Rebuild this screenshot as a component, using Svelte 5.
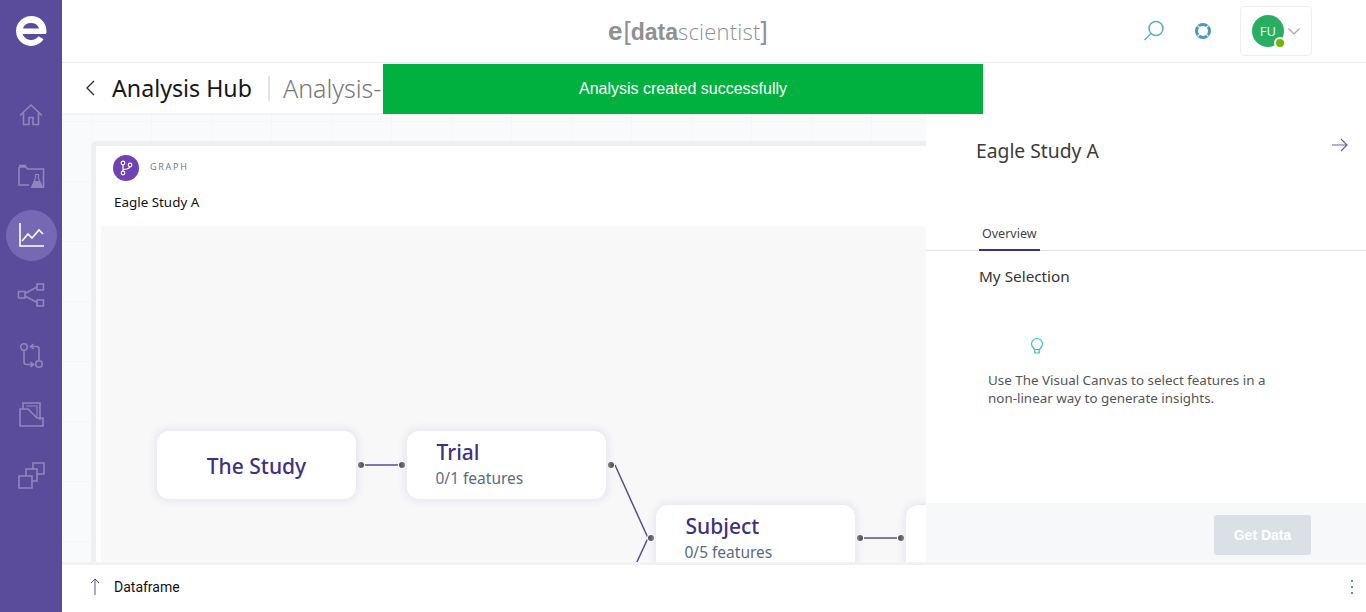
<script>
  const nav = ['home', 'lab', 'chart', 'share', 'flow', 'folder', 'copy'];

  const nodes = [
    { x: 56, y: 205, title: 'The Study' },
    { x: 306, y: 205, title: 'Trial', sub: '0/1 features' },
    { x: 555, y: 279, title: 'Subject', sub: '0/5 features' },
    { x: 805, y: 279, title: '' }
  ];

  const dots = [
    [260, 239], [301, 239], [510, 239], [550, 312], [759, 312], [800, 312]
  ];
</script>

<div class="shell">
  <aside class="sidebar">
    <div class="logo">
      <svg width="32" height="32" viewBox="0 0 32 32">
        <path d="M16 1a15 15 0 1 0 12.600 23.200l-5.200-3A9 9 0 0 1 7.600 19H31c.4-1 .5-2 .5-3A15 15 0 0 0 16 1zM7.800 13.400A9 9 0 0 1 24.200 13.400z" fill="#fff" fill-rule="evenodd"/>
      </svg>
    </div>
    <nav class="nav">
      {#each nav as item}
        <div class="nav-item" class:active={item === 'chart'}>
          <svg width="28" height="28" viewBox="0 0 28 28" fill="none" stroke="currentColor" stroke-width="1.600">
            {#if item === 'home'}
              <path d="M3 14.500 14 4l11 10.500M6.500 12v11.500h5.500V16.500h4v7h5.500V12"/>
            {:else if item === 'lab'}
              <path d="M2 6h7l1.500 2H26.500v18H25M2 6v18h10M2 4.500h7"/>
              <path d="M18.500 13.500h3v4l4 9h-11l4-9z" stroke-width="1.200"/>
              <path d="M17 20h6l2.500 6.500h-11z" fill="currentColor" stroke="none"/>
            {:else if item === 'chart'}
              <path d="M3 2v23h24M5 20l6-7 4 4 7-8 4 4"/>
            {:else if item === 'share'}
              <path d="M8 12.500 20 6M8 15l12 6.500"/>
              <path d="M1.500 10.500h6.500v6.500H1.500zM20 3h6.500v6H20zM20 19h6.500v6H20z"/>
            {:else if item === 'flow'}
              <circle cx="7" cy="6" r="3.300"/><circle cx="22" cy="23" r="3.300"/>
              <path d="M7 10v11q0 2.500 2.500 2.500H16M13.500 21l3 2.500-3 2.500M22 19V8q0-2.500-2.500-2.500H14M16.500 3l-3 2.500 3 2.500"/>
            {:else if item === 'folder'}
              <path d="M6 8V2h17v17M3 8h8l9 9h6v8H3z"/>
              <path d="M9 5h11v12" opacity="0.700"/>
            {:else}
              <path d="M2 15h13v12H2zM9 15V8h11v12h-5M16 8V2h11v11h-7"/>
            {/if}
          </svg>
        </div>
      {/each}
    </nav>
  </aside>

  <div class="main">
    <header class="topbar">
      <div class="brand"><span class="b-e">e</span><span class="b-br">[</span><span class="b-data">data</span><span class="b-sci">scientist</span><span class="b-br">]</span></div>
      <div class="top-actions">
        <svg class="search" width="24" height="24" viewBox="0 0 24 24" fill="none" stroke="#5aa9d6" stroke-width="1.500">
          <circle cx="14" cy="9.500" r="7"/><path d="M9 14.500 2.500 21"/>
        </svg>
        <svg class="help" width="18" height="18" viewBox="0 0 18 18" fill="none" stroke="#4a97c4">
          <circle cx="9" cy="9" r="6.500" stroke-width="3"/>
          <path d="M3.500 3.500l2.800 2.800M14.500 3.500l-2.800 2.800M3.500 14.500l2.800-2.800M14.500 14.500l-2.800-2.800" stroke="#e4f0f7" stroke-width="1.300"/>
        </svg>
        <div class="user">
          <div class="avatar">FU<span class="online"></span></div>
          <svg width="12" height="7" viewBox="0 0 12 7" fill="none" stroke="#a5a5a5" stroke-width="1.200"><path d="M.5.5 6 6l5.500-5.500"/></svg>
        </div>
      </div>
    </header>

    <div class="subbar">
      <svg width="12" height="18" viewBox="0 0 12 18" fill="none" stroke="#333" stroke-width="1.400"><path d="M10 2 3 9l7 7"/></svg>
      <h1>Analysis Hub</h1>
      <span class="sep"></span>
      <span class="crumb">Analysis-</span>
    </div>

    <div class="body">
      <section class="canvas">
        <div class="card">
          <div class="card-head">
            <span class="graph-badge">
              <svg width="16" height="16" viewBox="0 0 16 16" fill="none" stroke="#fff" stroke-width="1.200">
                <circle cx="5" cy="3" r="1.800"/><circle cx="5" cy="13" r="1.800"/><circle cx="12" cy="5" r="1.800"/>
                <path d="M5 5v6M5 9.500c4 0 6-.5 7-2.700"/>
              </svg>
            </span>
            <span class="graph-label">GRAPH</span>
          </div>
          <div class="card-title">Eagle Study A</div>
          <div class="diagram">
            <svg class="links" width="900" height="360" fill="none" stroke="#5a4c9b" stroke-width="1.500">
              <path d="M264 239h33M514 239l33 73-12 26M763 312h33"/>
            </svg>
            {#each dots as d}
              <span class="dot" style="left:{d[0] - 3}px;top:{d[1] - 3}px"></span>
            {/each}
            {#each nodes as n}
              <div class="node" class:center={!n.sub} style="left:{n.x}px;top:{n.y}px">
                <div class="node-title">{n.title}</div>
                {#if n.sub}<div class="node-sub">{n.sub}</div>{/if}
              </div>
            {/each}
          </div>
        </div>
      </section>

      <aside class="panel">
        <div class="panel-head">
          <h2>Eagle Study A</h2>
          <svg width="18" height="14" viewBox="0 0 18 14" fill="none" stroke="#6a5fa8" stroke-width="1.200"><path d="M1 7h15M10 1l6 6-6 6"/></svg>
        </div>
        <div class="tabs"><span class="tab">Overview</span></div>
        <div class="panel-body">
          <h3>My Selection</h3>
          <svg class="bulb" width="14" height="18" viewBox="0 0 14 18" fill="none" stroke="#35bfc4" stroke-width="1.200">
            <path d="M4.500 12.500C3 11 1.500 9.500 1.500 7a5.500 5.500 0 0 1 11 0c0 2.500-1.500 4-3 5.500zM4.800 12.500V16h4.400v-3.500"/>
          </svg>
          <p>Use The Visual Canvas to select features in a non-linear way to generate insights.</p>
        </div>
        <div class="panel-foot"><button disabled>Get Data</button></div>
      </aside>
    </div>

    <footer class="dock">
      <svg width="12" height="18" viewBox="0 0 12 18" fill="none" stroke="#5a4c9b" stroke-width="1"><path d="M6 17V1M2 5l4-4 4 4"/></svg>
      <span class="dock-label">Dataframe</span>
      <span class="kebab"><i></i><i></i><i></i></span>
    </footer>
  </div>

  <div class="toast">Analysis created successfully</div>
</div>

<style>
  :global(body) {
    margin: 0;
    font-family: "Noto Sans", sans-serif;
    overflow: hidden;
  }

  .shell {
    display: flex;
    width: 1366px;
    height: 612px;
    overflow: hidden;
    position: relative;
    background: #fff;
  }

  .sidebar {
    width: 62px;
    flex: none;
    background: #5a4c9b;
    display: flex;
    flex-direction: column;
    align-items: center;
  }

  .logo {
    height: 62px;
    display: flex;
    align-items: center;
    padding-right: 1px;
  }

  .nav {
    display: flex;
    flex-direction: column;
    align-items: center;
    gap: 9px;
    padding-top: 28px;
  }

  .nav-item {
    width: 51px;
    height: 51px;
    border-radius: 50%;
    display: flex;
    align-items: center;
    justify-content: center;
    color: #8f86bf;
  }

  .nav-item svg { margin-bottom: 2px; }

  .nav-item.active {
    background: #7668b3;
    color: #fff;
  }

  .main {
    flex: 1;
    min-width: 0;
    display: flex;
    flex-direction: column;
  }

  .topbar {
    height: 62px;
    flex: none;
    border-bottom: 1px solid #eeeeee;
    display: flex;
    align-items: center;
    justify-content: flex-end;
    position: relative;
  }

  .brand {
    position: absolute;
    left: 546px;
    top: 15px;
    font-family: "Liberation Sans", sans-serif;
    font-size: 23px;
    color: #8e9092;
    line-height: 32px;
    white-space: nowrap;
  }

  .b-e, .b-data { font-weight: 700; }
  .b-e { font-size: 26px; margin-right: 1px; }
  .b-br { font-weight: 400; font-size: 26px; }
  .b-sci { font-family: "Open Sans", sans-serif; font-weight: 300; font-size: 22px; letter-spacing: .2px; }

  .top-actions {
    display: flex;
    align-items: center;
    padding-right: 54px;
  }

  .search { margin-right: 28px; }
  .help { margin-right: 28px; }

  .user {
    width: 72px;
    height: 50px;
    box-sizing: border-box;
    border: 1px solid #eeeeee;
    border-radius: 5px;
    display: flex;
    align-items: center;
    padding-left: 11px;
    gap: 4px;
  }

  .avatar {
    width: 32px;
    height: 32px;
    border-radius: 50%;
    background: #27ae60;
    color: #e8f7ee;
    font-size: 13px;
    display: flex;
    align-items: center;
    justify-content: center;
    position: relative;
  }

  .online {
    position: absolute;
    right: -2px;
    bottom: -2px;
    width: 8px;
    height: 8px;
    border-radius: 50%;
    background: #6fb800;
    border: 2px solid #fff;
  }

  .subbar {
    height: 50px;
    flex: none;
    display: flex;
    align-items: center;
    padding-left: 22px;
    box-shadow: 0 1px 3px rgba(0, 0, 0, .05);
    position: relative;
    z-index: 1;
    background: #fff;
  }

  h1 {
    margin: 0 0 0 16px;
    font-size: 23.200px;
    font-weight: 400;
    color: #161616;
  }

  .sep {
    width: 2px;
    height: 25px;
    background: #e0e3e8;
    margin: 0 13px 0 16px;
  }

  .crumb {
    font-size: 25px;
    font-weight: 300;
    color: #777;
  }

  .body {
    flex: 1;
    min-height: 0;
    display: flex;
  }

  .canvas {
    flex: 1;
    min-width: 0;
    overflow: hidden;
    background-color: #f9fafb;
    background-image:
      linear-gradient(#f5f6f8 1px, transparent 1px),
      linear-gradient(90deg, #f5f6f8 1px, transparent 1px);
    background-size: 60px 60px;
    background-position: 29px 8px;
    padding: 28px 0 0 29px;
  }

  .card {
    width: 1000px;
    height: 600px;
    box-sizing: border-box;
    background: #fff;
    border: 5px solid #edf0f3;
    border-radius: 6px;
    display: flex;
    flex-direction: column;
  }

  .card-head {
    display: flex;
    align-items: center;
    gap: 11px;
    padding: 9px 0 0 17px;
  }

  .graph-badge {
    width: 26px;
    height: 26px;
    border-radius: 50%;
    background: #6f42b5;
    display: flex;
    align-items: center;
    justify-content: center;
  }

  .graph-label {
    font-size: 9px;
    letter-spacing: 1.700px;
    color: #6e7a85;
    margin-bottom: 4px;
  }

  .card-title {
    font-size: 13.400px;
    color: #111;
    margin: 11px 0 0 18px;
    line-height: 20px;
  }

  .diagram {
    position: relative;
    flex: 1;
    margin: 14px 0 0 5px;
    background: #f8f8f9;
  }

  .links {
    position: absolute;
    left: 0;
    top: 0;
  }

  .dot {
    position: absolute;
    width: 6px;
    height: 6px;
    border-radius: 50%;
    background: #4d4d4d;
    box-shadow: 0 0 0 1px #fff;
  }

  .node {
    position: absolute;
    box-sizing: border-box;
    width: 199px;
    height: 68px;
    background: #fff;
    border-radius: 12px;
    box-shadow: 0 0 6px 3px rgba(220, 224, 235, .6);
    padding: 7px 0 0 29.500px;
  }

  .node.center {
    padding: 21px 0 0;
    text-align: center;
  }

  .node-title {
    font-size: 21px;
    font-weight: 500;
    color: #3f3182;
    line-height: 28px;
  }

  .node-sub {
    font-size: 15.500px;
    color: #5a6b80;
    line-height: 22px;
    margin: 1px 0 0 -1px;
  }

  .panel {
    width: 440px;
    flex: none;
    background: #fff;
    display: flex;
    flex-direction: column;
    position: relative;
    z-index: 1;
  }

  .panel-head {
    display: flex;
    justify-content: space-between;
    padding: 23px 17px 0 50px;
    height: 94px;
    box-sizing: border-box;
  }

  h2 {
    margin: 0;
    font-size: 19.300px;
    font-weight: 400;
    color: #3a3a3a;
    line-height: 30px;
  }

  .panel-head svg { margin-top: 2px; }

  .tabs {
    height: 44px;
    box-sizing: border-box;
    border-bottom: 1px solid #dfe1ea;
    padding-left: 53px;
    display: flex;
    align-items: flex-end;
  }

  .tab {
    font-size: 12.500px;
    color: #444;
    padding: 0 3px 6px;
    line-height: 19px;
    border-bottom: 2px solid #3f3182;
    margin-bottom: -1px;
  }

  .panel-body {
    flex: 1;
    padding: 14px 0 0 53px;
  }

  h3 {
    margin: 0;
    font-size: 15.300px;
    font-weight: 400;
    color: #333;
    line-height: 22px;
  }

  .bulb {
    display: block;
    margin: 50px 0 0 51px;
  }

  p {
    margin: 16px 0 0 9px;
    width: 300px;
    font-size: 13.400px;
    line-height: 18px;
    color: #555;
  }

  .panel-foot {
    height: 59px;
    box-sizing: border-box;
    background: #f7f8fa;
    display: flex;
    align-items: flex-start;
    justify-content: flex-end;
    padding: 12px 55px 0 0;
  }

  button {
    width: 97px;
    height: 40px;
    border: 0;
    border-radius: 3px;
    background: #dbdfe6;
    color: #fff;
    font-family: "Liberation Sans", sans-serif;
    font-size: 14px;
    font-weight: 700;
  }

  .dock {
    height: 50px;
    flex: none;
    box-sizing: border-box;
    border-top: 3px solid #f1f2f4;
    display: flex;
    align-items: center;
    padding: 0 13px 3px 27px;
    position: relative;
    z-index: 2;
    background: #fff;
  }

  .dock-label {
    margin-left: 13px;
    font-family: Roboto, sans-serif;
    font-size: 14px;
    color: #111;
  }

  .kebab {
    margin-left: auto;
    display: flex;
    flex-direction: column;
    gap: 4px;
  }

  .kebab i {
    display: block;
    width: 2px;
    height: 2px;
    background: #4f93c9;
  }

  .toast {
    position: absolute;
    left: 383px;
    top: 64px;
    width: 600px;
    height: 50px;
    background: #00b140;
    color: #fff;
    z-index: 5;
    display: flex;
    align-items: center;
    justify-content: center;
    font-family: "Liberation Sans", sans-serif;
    font-size: 16px;
  }
</style>
